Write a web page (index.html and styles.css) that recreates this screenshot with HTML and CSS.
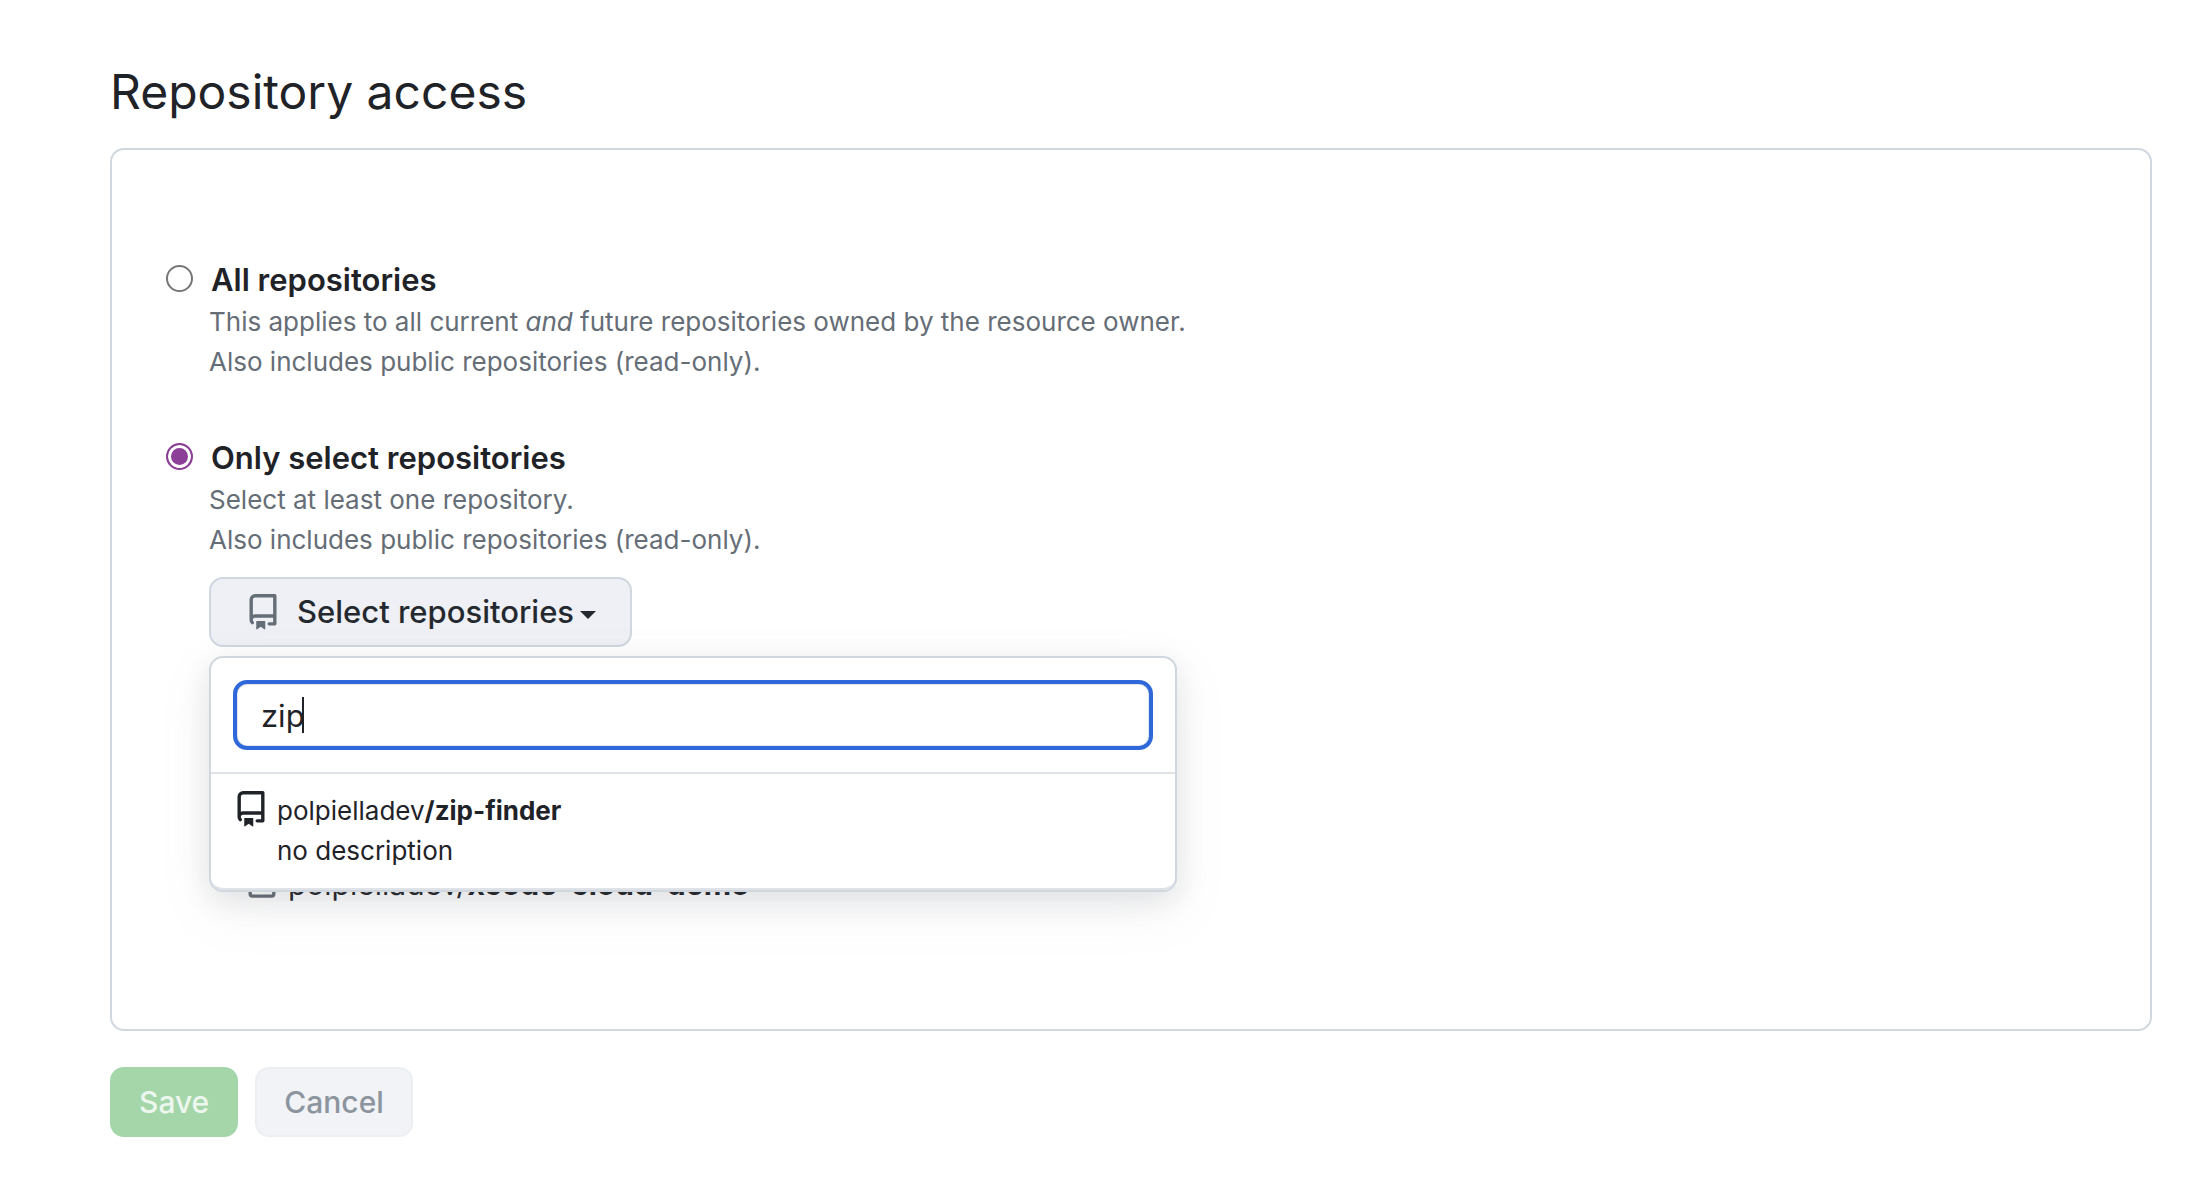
FILE: index.html
```html
<!DOCTYPE html>
<html lang="en">
<head>
<meta charset="utf-8">
<title>Repository access</title>
<link rel="stylesheet" href="styles.css">
</head>
<body>
<svg class="sprite" aria-hidden="true">
  <symbol id="repo" viewBox="0 0 16 16">
    <path d="M2 2.5A2.5 2.5 0 0 1 4.5 0h8.75a.75.75 0 0 1 .75.75v12.5a.75.75 0 0 1-.75.75h-2.5a.75.75 0 0 1 0-1.5h1.75v-2h-8a1 1 0 0 0-.714 1.7.75.75 0 1 1-1.072 1.05A2.495 2.495 0 0 1 2 11.5Zm10.5-1h-8a1 1 0 0 0-1 1v6.708A2.486 2.486 0 0 1 4.5 9h8ZM5 12.25a.25.25 0 0 1 .25-.25h3.5a.25.25 0 0 1 .25.25v3.25a.25.25 0 0 1-.4.2l-1.45-1.087a.249.249 0 0 0-.3 0L5.4 15.7a.25.25 0 0 1-.4-.2Z"/>
  </symbol>
  <symbol id="lock" viewBox="0 0 16 16">
    <path d="M4 4a4 4 0 0 1 8 0v2h.25c.966 0 1.75.784 1.75 1.75v5.5A1.75 1.75 0 0 1 12.25 15h-8.5A1.75 1.75 0 0 1 2 13.25v-5.5C2 6.784 2.784 6 3.75 6H4Zm8.25 3.5h-8.5a.25.25 0 0 0-.25.25v5.5c0 .138.112.25.25.25h8.5a.25.25 0 0 0 .25-.25v-5.5a.25.25 0 0 0-.25-.25ZM10.5 6V4a2.5 2.5 0 1 0-5 0v2Z"/>
  </symbol>
</svg>
<main class="page">
  <h1 class="title">Repository access</h1>
  <form class="form">
    <div class="panel">
      <div class="option">
        <input class="radio" type="radio" name="access" id="access-all">
        <div class="option-body">
          <label class="option-label" for="access-all">All repositories</label>
          <p class="note">This applies to all current <em>and</em> future repositories owned by the resource owner.<br>Also includes public repositories (read-only).</p>
        </div>
      </div>
      <div class="option">
        <input class="radio" type="radio" name="access" id="access-select" checked>
        <div class="option-body">
          <label class="option-label" for="access-select">Only select repositories</label>
          <p class="note">Select at least one repository.<br>Also includes public repositories (read-only).</p>
          <div class="picker">
            <button class="btn picker-toggle" type="button" aria-expanded="true">
              <svg class="icon icon-muted" aria-hidden="true"><use href="#repo"/></svg>
              <span class="picker-text">Select repositories<span class="caret"></span></span>
            </button>
            <div class="menu">
              <div class="search">
                <input class="search-input" type="text" value="zip" aria-label="Search for a repository">
                <span class="cursor"></span>
              </div>
              <button class="result" type="button">
                <svg class="icon" aria-hidden="true"><use href="#repo"/></svg>
                <span class="result-text">polpielladev<strong>/zip-finder</strong><br>no description</span>
              </button>
            </div>
          </div>
          <div class="selected">
            <svg class="icon icon-muted" aria-hidden="true"><use href="#lock"/></svg>
            <span>polpielladev/<strong>xcode-cloud-demo</strong></span>
          </div>
        </div>
      </div>
    </div>
    <div class="actions">
      <button class="btn btn-save" type="submit" disabled>Save</button>
      <button class="btn btn-cancel" type="button" disabled>Cancel</button>
    </div>
  </form>
</main>
</body>
</html>
```
FILE: styles.css
```css
* { box-sizing: border-box; }

body {
  margin: 0;
  background: #fff;
  color: #1f2328;
  font-family: Inter, "Liberation Sans", sans-serif;
  font-size: 26px;
  line-height: 40px;
}

strong { font-weight: 700; }

.sprite { display: none; }

.page { padding: 56px 38px 50px 110px; }

.title {
  margin: 0 0 20px;
  font-size: 48px;
  font-weight: 400;
  line-height: 72px;
}

.panel {
  display: flex;
  flex-direction: column;
  gap: 56px;
  padding: 110px 54px;
  border: 2px solid #d0d7de;
  border-radius: 14px;
}

.option {
  display: flex;
  align-items: flex-start;
  gap: 16px;
}

.radio {
  appearance: none;
  flex: none;
  width: 27px;
  height: 27px;
  margin: 5px 0 0;
  border: 2px solid #767676;
  border-radius: 50%;
  background: #fff;
}

.radio:checked {
  border-color: #8b3f96;
  background: #8b3f96;
  box-shadow: inset 0 0 0 3px #fff;
}

.option-body { flex: 1; min-width: 0; }

.option-label {
  display: block;
  padding: 0 0 2px 2px;
  font-size: 31px;
  font-weight: 600;
  line-height: 40px;
}

.note { margin: 0; color: #656d76; }

.btn {
  height: 70px;
  border: 2px solid transparent;
  border-radius: 14px;
  font: 500 31px/42px Inter, "Liberation Sans", sans-serif;
  white-space: nowrap;
}

.icon {
  flex: none;
  width: 36px;
  height: 36px;
  fill: currentColor;
}

.icon-muted { color: #656d76; }

.picker { position: relative; margin-top: 17px; }

.picker-toggle {
  display: flex;
  align-items: center;
  gap: 16px;
  padding: 0 34px;
  border-color: #d0d7de;
  background: #eff0f5;
  color: #24292f;
}

.caret {
  display: inline-block;
  margin-left: 6px;
  border: 8px solid transparent;
  border-top-color: currentColor;
  border-bottom: 0;
  vertical-align: middle;
}

.menu {
  position: absolute;
  top: 79px;
  left: 0;
  z-index: 1;
  width: 968px;
  border: 2px solid #d0d7de;
  border-radius: 14px;
  background: #fff;
  box-shadow: 0 18px 52px rgba(140, 149, 159, 0.1), 0 8px 30px rgba(27, 31, 36, 0.1);
}

.search {
  position: relative;
  padding: 22px;
  border-bottom: 2px solid #dfe3e8;
}

.search-input {
  display: block;
  width: 100%;
  height: 70px;
  padding: 0 24px;
  border: 4px solid #2f68d8;
  border-radius: 14px;
  outline: 0;
  background: #fff;
  box-shadow: inset 0 0 0 1px #e3e8ee;
  color: #1f2328;
  font: 31px/42px Inter, "Liberation Sans", sans-serif;
}

.cursor {
  position: absolute;
  top: 39px;
  left: 91px;
  width: 2px;
  height: 36px;
  background: #1f2328;
}

.result {
  display: flex;
  align-items: flex-start;
  gap: 8px;
  width: 100%;
  padding: 17px 22px;
  border: 0;
  border-bottom: 2px solid #dfe3e8;
  border-radius: 0 0 12px 12px;
  background: transparent;
  color: #1f2328;
  font: 26px/40px Inter, "Liberation Sans", sans-serif;
  text-align: left;
}

.selected {
  display: flex;
  align-items: flex-start;
  gap: 8px;
  margin-top: 217px;
  padding: 0 0 15px 35px;
  font-size: 30px;
}

.actions {
  display: flex;
  gap: 17px;
  margin-top: 36px;
}

.btn-save,
.btn-cancel {
  padding: 0 27px;
  font-size: 30px;
}

.btn-save {
  background: #a4d6aa;
  color: #edf7ee;
}

.btn-cancel {
  border-color: #eceff2;
  background: #f1f3f7;
  color: #8c949e;
}
```
